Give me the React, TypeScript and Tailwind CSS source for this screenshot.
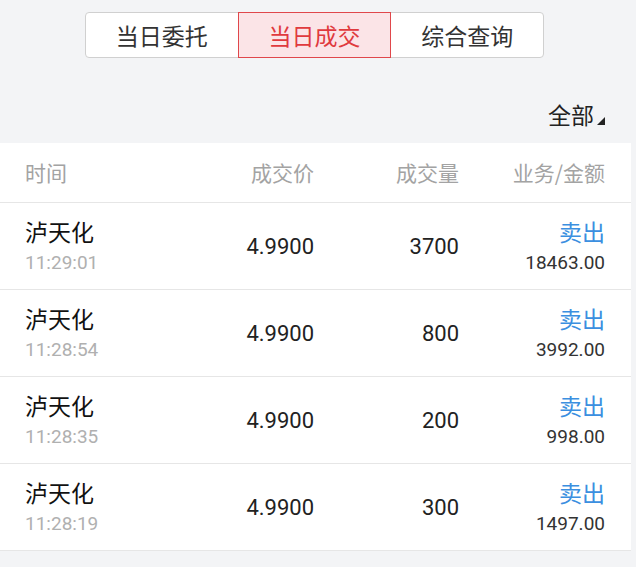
import React from "react";

const font = { fontFamily: '"Noto Sans CJK SC", "Noto Sans", Roboto, sans-serif' };
const num = { fontFamily: 'Roboto, "Noto Sans CJK SC", sans-serif' };

const tabs = ["当日委托", "当日成交", "综合查询"];

const rows = [
    { name: "泸天化", time: "11:29:01", price: "4.9900", qty: "3700", amount: "18463.00" },
    { name: "泸天化", time: "11:28:54", price: "4.9900", qty: "800", amount: "3992.00" },
    { name: "泸天化", time: "11:28:35", price: "4.9900", qty: "200", amount: "998.00" },
    { name: "泸天化", time: "11:28:19", price: "4.9900", qty: "300", amount: "1497.00" },
];

export default function App() {
    return (
        <div className="w-[636px] h-[567px] bg-[#f3f4f6] overflow-hidden" style={font}>
            {/* segmented tabs */}
            <div className="flex pt-[12px] pl-[85px]">
                <div className="flex w-[459px] h-[46px] bg-white border border-[#d0d0d0] rounded-[4px]">
                    {tabs.map((t, i) => (
                        <div
                            key={t}
                            className={
                                i === 1
                                    ? "flex-1 flex items-center justify-center text-[23px] text-[#e03a3e] bg-[#fbe4e7] border border-[#e0474b] -my-px"
                                    : "flex-1 flex items-center justify-center text-[23px] text-[#333]"
                            }
                        >
                            {t}
                        </div>
                    ))}
                </div>
            </div>

            {/* filter */}
            <div className="flex items-start justify-end pr-[31px] pt-[43px] h-[85px]">
                <div className="relative text-[23px] text-[#222] leading-[26px] pr-[11px]">
                    全部
                    <span className="absolute right-0 bottom-[2px] w-0 h-0 border-l-[8px] border-l-transparent border-b-[8px] border-b-[#222]" />
                </div>
            </div>

            {/* table */}
            <div className="w-[631px] bg-white">
                <div className="flex items-center h-[60px] border-b border-[#e6e6e6] text-[21px] text-[#a3a3a3] pl-[25px] pr-[26px]">
                    <div className="flex-1">时间</div>
                    <div className="w-[120px] text-right">成交价</div>
                    <div className="w-[145px] text-right">成交量</div>
                    <div className="w-[146px] text-right">业务/金额</div>
                </div>
                {rows.map((r, i) => (
                    <div key={i} className="flex items-center h-[87px] border-b border-[#e6e6e6] pl-[25px] pr-[26px]">
                        <div className="flex-1 flex flex-col">
                            <span className="text-[23px] text-[#111] leading-[30px] -mt-[2px]">{r.name}</span>
                            <span className="text-[19px] text-[#b0b0b0] leading-[24px] mt-[5px]" style={num}>{r.time}</span>
                        </div>
                        <div className="w-[120px] text-right text-[22px] text-[#222]" style={num}>{r.price}</div>
                        <div className="w-[145px] text-right text-[22px] text-[#222]" style={num}>{r.qty}</div>
                        <div className="w-[146px] flex flex-col items-end">
                            <span className="text-[23px] text-[#3b8fe0] leading-[30px] -mt-[2px]">卖出</span>
                            <span className="text-[19px] text-[#333] leading-[24px] mt-[5px]" style={num}>{r.amount}</span>
                        </div>
                    </div>
                ))}
            </div>
        </div>
    );
}
